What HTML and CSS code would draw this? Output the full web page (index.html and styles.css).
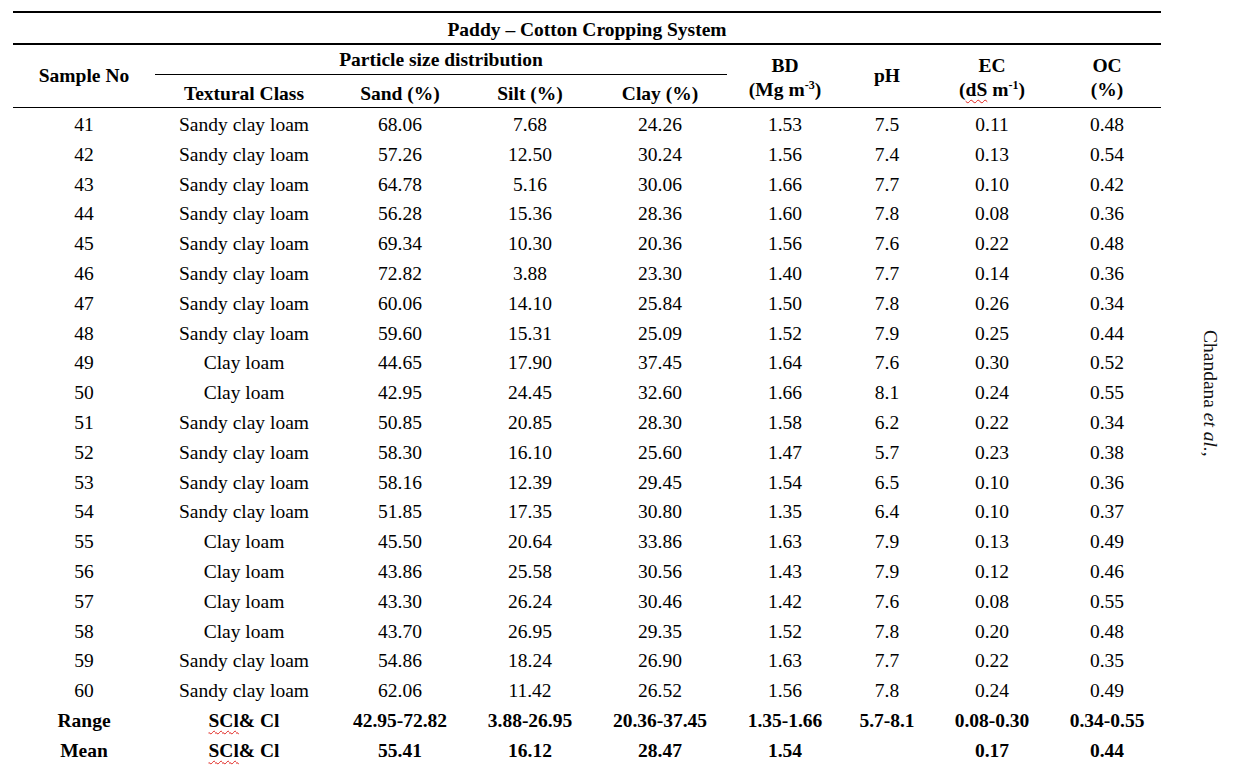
FILE: index.html
```html
<!DOCTYPE html>
<html>
<head>
<meta charset="utf-8">
<link rel="stylesheet" href="styles.css">
</head>
<body>
<div class="page">
<table class="soil">
<colgroup>
<col class="c1"><col class="c2"><col class="c3"><col class="c4"><col class="c5"><col class="c6"><col class="c7"><col class="c8"><col class="c9">
</colgroup>
<thead>
<tr class="title-row"><th colspan="9" class="title">Paddy – Cotton Cropping System</th></tr>
<tr class="h1">
<th rowspan="2" class="hb">Sample No</th>
<th colspan="4" class="psd">Particle size distribution</th>
<th rowspan="2" class="hb span">BD<br>(Mg m<sup>-3</sup>)</th>
<th rowspan="2" class="hb">pH</th>
<th rowspan="2" class="hb span">EC<br>(<span class="sq">dS</span> m<sup>-1</sup>)</th>
<th rowspan="2" class="hb span">OC<br>(%)</th>
</tr>
<tr class="h2">
<th class="hb">Textural Class</th>
<th class="hb">Sand (%)</th>
<th class="hb">Silt (%)</th>
<th class="hb">Clay (%)</th>
</tr>
</thead>
<tbody>
<tr class="first"><td>41</td><td>Sandy clay loam</td><td>68.06</td><td>7.68</td><td>24.26</td><td>1.53</td><td>7.5</td><td>0.11</td><td>0.48</td></tr>
<tr><td>42</td><td>Sandy clay loam</td><td>57.26</td><td>12.50</td><td>30.24</td><td>1.56</td><td>7.4</td><td>0.13</td><td>0.54</td></tr>
<tr><td>43</td><td>Sandy clay loam</td><td>64.78</td><td>5.16</td><td>30.06</td><td>1.66</td><td>7.7</td><td>0.10</td><td>0.42</td></tr>
<tr><td>44</td><td>Sandy clay loam</td><td>56.28</td><td>15.36</td><td>28.36</td><td>1.60</td><td>7.8</td><td>0.08</td><td>0.36</td></tr>
<tr><td>45</td><td>Sandy clay loam</td><td>69.34</td><td>10.30</td><td>20.36</td><td>1.56</td><td>7.6</td><td>0.22</td><td>0.48</td></tr>
<tr><td>46</td><td>Sandy clay loam</td><td>72.82</td><td>3.88</td><td>23.30</td><td>1.40</td><td>7.7</td><td>0.14</td><td>0.36</td></tr>
<tr><td>47</td><td>Sandy clay loam</td><td>60.06</td><td>14.10</td><td>25.84</td><td>1.50</td><td>7.8</td><td>0.26</td><td>0.34</td></tr>
<tr><td>48</td><td>Sandy clay loam</td><td>59.60</td><td>15.31</td><td>25.09</td><td>1.52</td><td>7.9</td><td>0.25</td><td>0.44</td></tr>
<tr><td>49</td><td>Clay loam</td><td>44.65</td><td>17.90</td><td>37.45</td><td>1.64</td><td>7.6</td><td>0.30</td><td>0.52</td></tr>
<tr><td>50</td><td>Clay loam</td><td>42.95</td><td>24.45</td><td>32.60</td><td>1.66</td><td>8.1</td><td>0.24</td><td>0.55</td></tr>
<tr><td>51</td><td>Sandy clay loam</td><td>50.85</td><td>20.85</td><td>28.30</td><td>1.58</td><td>6.2</td><td>0.22</td><td>0.34</td></tr>
<tr><td>52</td><td>Sandy clay loam</td><td>58.30</td><td>16.10</td><td>25.60</td><td>1.47</td><td>5.7</td><td>0.23</td><td>0.38</td></tr>
<tr><td>53</td><td>Sandy clay loam</td><td>58.16</td><td>12.39</td><td>29.45</td><td>1.54</td><td>6.5</td><td>0.10</td><td>0.36</td></tr>
<tr><td>54</td><td>Sandy clay loam</td><td>51.85</td><td>17.35</td><td>30.80</td><td>1.35</td><td>6.4</td><td>0.10</td><td>0.37</td></tr>
<tr><td>55</td><td>Clay loam</td><td>45.50</td><td>20.64</td><td>33.86</td><td>1.63</td><td>7.9</td><td>0.13</td><td>0.49</td></tr>
<tr><td>56</td><td>Clay loam</td><td>43.86</td><td>25.58</td><td>30.56</td><td>1.43</td><td>7.9</td><td>0.12</td><td>0.46</td></tr>
<tr><td>57</td><td>Clay loam</td><td>43.30</td><td>26.24</td><td>30.46</td><td>1.42</td><td>7.6</td><td>0.08</td><td>0.55</td></tr>
<tr><td>58</td><td>Clay loam</td><td>43.70</td><td>26.95</td><td>29.35</td><td>1.52</td><td>7.8</td><td>0.20</td><td>0.48</td></tr>
<tr><td>59</td><td>Sandy clay loam</td><td>54.86</td><td>18.24</td><td>26.90</td><td>1.63</td><td>7.7</td><td>0.22</td><td>0.35</td></tr>
<tr><td>60</td><td>Sandy clay loam</td><td>62.06</td><td>11.42</td><td>26.52</td><td>1.56</td><td>7.8</td><td>0.24</td><td>0.49</td></tr>
<tr class="sum"><td>Range</td><td><span class="sq">SCl</span>&amp; Cl</td><td>42.95-72.82</td><td>3.88-26.95</td><td>20.36-37.45</td><td>1.35-1.66</td><td>5.7-8.1</td><td>0.08-0.30</td><td>0.34-0.55</td></tr>
<tr class="sum"><td>Mean</td><td><span class="sq">SCl</span>&amp; Cl</td><td>55.41</td><td>16.12</td><td>28.47</td><td>1.54</td><td></td><td>0.17</td><td>0.44</td></tr>
</tbody>
</table>
<div class="side">Chandana <i>et al.</i>,</div>
</div>
</body>
</html>
```

FILE: styles.css
```css
html, body {
  margin: 0;
  padding: 0;
  background: #fff;
}
body {
  font-family: "Liberation Serif", "Times New Roman", serif;
  color: #000;
  font-size: 19.5px;
}
.page {
  display: flex;
  flex-direction: row;
  align-items: flex-start;
  padding: 11px 0 0 13px;
}
.soil {
  border-collapse: collapse;
  table-layout: fixed;
  width: 1148px;
}
.c1 { width: 142px; }
.c2 { width: 178px; }
.c3 { width: 134px; }
.c4 { width: 126px; }
.c5 { width: 134px; }
.c6 { width: 116px; }
.c7 { width: 88px; }
.c8 { width: 122px; }
.c9 { width: 108px; }
.soil th, .soil td {
  padding: 0;
  text-align: center;
  vertical-align: middle;
  white-space: nowrap;
}
.soil th {
  font-weight: bold;
  line-height: 24px;
}
.title-row { height: 32px; }
.title-row th {
  border-top: 2px solid #000;
  border-bottom: 2px solid #000;
  padding-top: 4px;
}
.h1 { height: 30px; }
.h1 .psd { padding-top: 2px; }
.h2 { height: 33px; }
.h2 th { padding-top: 6px; }
.h1 .span { padding-top: 4px; }
.psd {
  border-bottom: 1px solid #000;
}
.hb {
  border-bottom: 1px solid #000;
}
.soil tbody tr {
  height: 29.8px;
}
.soil tbody tr.first {
  height: 33px;
}
.soil tbody tr.first td {
  padding-top: 3px;
}
.soil td {
  line-height: 22px;
}
.sum td {
  font-weight: bold;
}
sup {
  font-size: 12px;
  line-height: 0;
  vertical-align: 7px;
}
.sq {
  text-decoration: underline wavy #e0201a;
  text-decoration-thickness: 1px;
  text-underline-offset: 3px;
}
.side {
  writing-mode: vertical-rl;
  margin: 319px 0 0 38px;
  font-size: 19.5px;
  color: #111;
  white-space: nowrap;
}
```
